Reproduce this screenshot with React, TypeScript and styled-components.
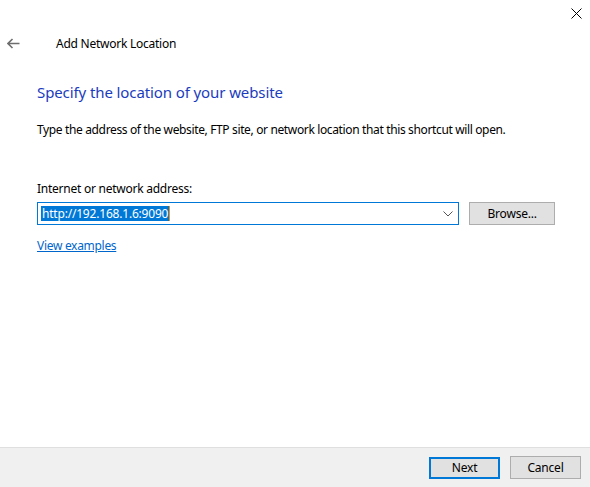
import React, { useState } from "react";
import styled, { createGlobalStyle } from "styled-components";

const GlobalStyle = createGlobalStyle`
  html, body {
    margin: 0;
    padding: 0;
    background: #ffffff;
  }
  body {
    font-family: "Noto Sans", "Open Sans", "Liberation Sans", sans-serif;
    font-size: 12px;
    color: #000000;
  }
`;

const Window = styled.div`
  width: 590px;
  height: 487px;
  display: flex;
  flex-direction: column;
  background: #ffffff;
  overflow: hidden;
`;

const TitleBar = styled.div`
  height: 26px;
  display: flex;
  justify-content: flex-end;
  align-items: flex-start;
`;

const CloseButton = styled.button`
  width: 28px;
  height: 26px;
  border: none;
  background: transparent;
  display: flex;
  align-items: center;
  justify-content: center;
  padding: 0;
`;

const NavBar = styled.div`
  display: flex;
  align-items: center;
  height: 34px;
`;

const BackButton = styled.button`
  width: 26px;
  height: 26px;
  margin-left: 0;
  border: none;
  background: transparent;
  padding: 0;
  display: flex;
  align-items: center;
  justify-content: center;
`;

const WizardTitle = styled.span`
  margin-left: 30px;
  font-size: 12px;
  letter-spacing: -0.25px;
  color: #000000;
`;

const Body = styled.div`
  flex: 1;
  display: flex;
  flex-direction: column;
  padding: 0 35px 0 37px;
`;

const Heading = styled.h1`
  margin: 22px 0 0 0;
  font-size: 15px;
  font-weight: 400;
  letter-spacing: -0.1px;
  color: #1a3cbe;
  line-height: 20px;
`;

const Description = styled.p`
  margin: 20px 0 0 0;
  font-size: 12px;
  line-height: 16px;
  letter-spacing: -0.36px;
`;

const FieldLabel = styled.label`
  margin-top: 43px;
  font-size: 12px;
  line-height: 16px;
  letter-spacing: -0.25px;
`;

const FieldRow = styled.div`
  display: flex;
  align-items: center;
  margin-top: 5px;
  gap: 10px;
`;

const Combo = styled.div`
  width: 424px;
  height: 23px;
  box-sizing: border-box;
  border: 1px solid #0078d7;
  display: flex;
  align-items: center;
  padding: 0 3px;
`;

const Selected = styled.span`
  background: #0078d7;
  color: #ffffff;
  font-size: 12px;
  line-height: 15px;
  padding: 0 1px;
  letter-spacing: -0.2px;
  border-right: 1px solid #ff8c00;
`;

const ComboFill = styled.div`
  flex: 1;
`;

const Chevron = styled.div`
  width: 14px;
  display: flex;
  align-items: center;
  justify-content: center;
`;

const Button = styled.button<{ $default?: boolean }>`
  box-sizing: border-box;
  height: ${(p) => (p.$default ? "22px" : "23px")};
  width: ${(p) => (p.$default ? "71px" : "71px")};
  background: #e1e1e1;
  border: ${(p) => (p.$default ? "2px solid #0078d7" : "1px solid #adadad")};
  font-family: "Noto Sans", "Open Sans", "Liberation Sans", sans-serif;
  font-size: 12px;
  letter-spacing: -0.2px;
  color: #000000;
  padding: 0;
  display: flex;
  align-items: center;
  justify-content: center;
`;

const BrowseButton = styled(Button)`
  width: 86px;
`;

const Link = styled.a`
  margin-top: 12px;
  align-self: flex-start;
  color: #0066cc;
  font-size: 12px;
  letter-spacing: -0.3px;
  text-decoration: underline;
  cursor: pointer;
`;

const Footer = styled.div`
  height: 39px;
  background: #f0f0f0;
  border-top: 1px solid #dfdfdf;
  display: flex;
  justify-content: flex-end;
  align-items: center;
  gap: 10px;
  padding: 0 9px 0 0;
`;

export default function App() {
  const [address] = useState("http://192.168.1.6:9090");

  return (
    <Window>
      <GlobalStyle />
      <TitleBar>
        <CloseButton aria-label="Close">
          <svg width="11" height="11" viewBox="0 0 11 11">
            <path d="M0.5 0.5 L10.5 10.5 M10.5 0.5 L0.5 10.5" stroke="#000" strokeWidth="1" />
          </svg>
        </CloseButton>
      </TitleBar>
      <NavBar>
        <BackButton aria-label="Back">
          <svg width="13" height="11" viewBox="0 0 13 11">
            <path d="M5.5 1 L1 5.5 L5.5 10 M1 5.5 H12.5" stroke="#6e6e6e" strokeWidth="1.6" fill="none" />
          </svg>
        </BackButton>
        <WizardTitle>Add Network Location</WizardTitle>
      </NavBar>
      <Body>
        <Heading>Specify the location of your website</Heading>
        <Description>
          Type the address of the website, FTP site, or network location that this shortcut will open.
        </Description>
        <FieldLabel>Internet or network address:</FieldLabel>
        <FieldRow>
          <Combo>
            <Selected>{address}</Selected>
            <ComboFill />
            <Chevron>
              <svg width="10" height="6" viewBox="0 0 10 6">
                <path d="M0.5 0.5 L5 5 L9.5 0.5" stroke="#555" strokeWidth="1" fill="none" />
              </svg>
            </Chevron>
          </Combo>
          <BrowseButton>Browse...</BrowseButton>
        </FieldRow>
        <Link>View examples</Link>
      </Body>
      <Footer>
        <Button $default>Next</Button>
        <Button>Cancel</Button>
      </Footer>
    </Window>
  );
}
